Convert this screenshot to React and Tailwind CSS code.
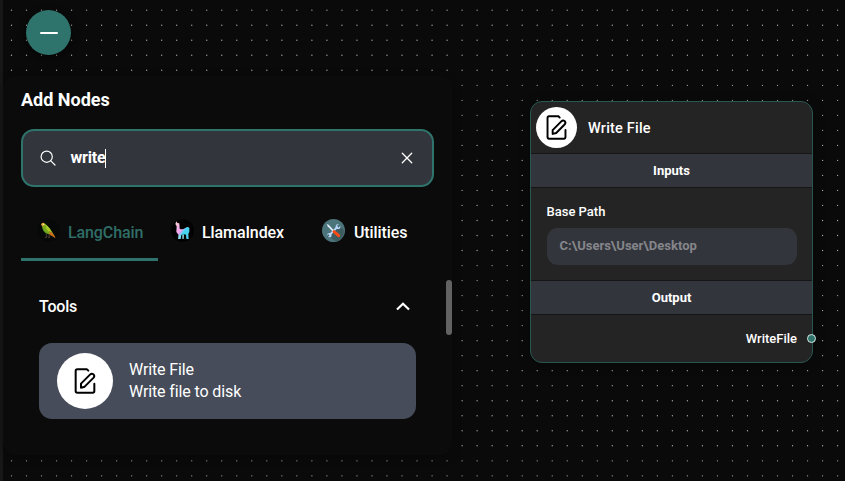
import React from "react";

function EditIcon({ className }) {
  return (
    <svg className={className} viewBox="0 0 64 78" fill="none" stroke="#000" strokeWidth="6" strokeLinecap="round" strokeLinejoin="round">
      <path d="M42 8 L38 4 H9 Q4 4 4 9 V69 Q4 74 9 74 H55 Q60 74 60 69 V47" />
      <path d="M20 47 L47 20 Q52 15 57 19 Q62 23 58 29 L31 56 L20 59 Z" />
    </svg>
  );
}

const GRID_STEP = 15.02;
const GRID_DOTS = Array.from({ length: 32 * 56 }, (_, i) => ({
  x: 11.5 + (i % 56) * GRID_STEP,
  y: 10.2 + Math.floor(i / 56) * GRID_STEP,
}));

function DotGrid() {
  return (
    <svg className="absolute inset-0 h-full w-full" fill="#a8a8a8">
      {GRID_DOTS.map((dot, i) => (
        <circle key={i} cx={dot.x} cy={dot.y} r="0.66" />
      ))}
    </svg>
  );
}

function Parrot() {
  return (
    <svg className="h-[23px] w-[23px]" viewBox="0 0 69 69">
      <circle cx="34.5" cy="34.5" r="34" fill="#070808" />
      <path d="M27 43 L30 54 M36 46 L37 54 M23 55 H30 M33 55 H39" stroke="#5a4a3a" strokeWidth="2.5" fill="none" />
      <path d="M14 16 Q18 10 25 14 L35 25 Q44 34 55 56 L37 46 Q20 42 16 26 Z" fill="#79a91a" />
      <path d="M26 17 Q39 25 43 39 L36 38 Q26 30 26 17" fill="#a8cb2a" />
      <path d="M37 35 Q47 41 56 57 L38 47 Z" fill="#d4651f" />
      <path d="M17 27 Q21 39 32 44 L25 42 Q17 37 16 27Z" fill="#3f8220" />
      <path d="M12 18 Q14 10 21 12 L24 17 L17 21 Z" fill="#e9a83c" />
      <circle cx="20" cy="16" r="2" fill="#fff1ca" />
    </svg>
  );
}

function Llama() {
  return (
    <svg className="h-[23px] w-[23px]" viewBox="0 0 69 69">
      <defs>
        <linearGradient id="llama" x1="0" y1="0" x2="1" y2="1">
          <stop offset="0" stopColor="#ffd7c6" />
          <stop offset=".25" stopColor="#f5b5e5" />
          <stop offset=".46" stopColor="#f2a0ed" />
          <stop offset=".6" stopColor="#42d7f5" />
          <stop offset="1" stopColor="#54c9e9" />
        </linearGradient>
      </defs>
      <circle cx="34.5" cy="34.5" r="34" fill="#000" />
      <path d="M13 15 L16 7 L19 12 L25 13 L26 29 Q34 33 43 27 Q51 21 55 27 L55 39 L52 45 L53 60 H46 L45 47 L39 46 L31 48 L29 60 H22 L23 48 L16 39 L17 22 Z" fill="url(#llama)" />
      <path d="M23 48 H29 L28 60 H22Z M34 48 L39 46 L38 60 H34Z" fill="#8fdceb" />
    </svg>
  );
}

function ToolsBadge() {
  return (
    <svg className="h-[23px] w-[23px]" viewBox="0 0 69 69">
      <circle cx="34.5" cy="34.5" r="34.5" fill="#4c747b" />
      <path d="M52 20 L66 34 Q67 57 43 68 L18 50Z" fill="#3d5d60" />
      <path d="M22 49 L47 23" stroke="#b9d7fa" strokeWidth="6" />
      <path d="M51 15 L44 21 L49 26 L55 20 Q57 31 46 30 Q38 28 42 19 Q45 14 51 15Z M14 49 Q18 40 27 43 L29 51 Q26 58 18 53 L24 49 L20 46Z" fill="#b9d7fa" />
      <path d="M14 15 L20 17 L38 37 L34 40 L17 22Z" fill="#e2effb" />
      <path d="M36 38 L50 50" stroke="#ff4b15" strokeWidth="9" strokeLinecap="round" />
    </svg>
  );
}

function AddNodesPanel() {
  return (
    <section className="ml-[3px] mt-[21px] flex h-[379px] w-[449px] flex-col rounded-xl bg-[#0b0b0b] pl-[18px] shadow-[0_2px_10px_rgba(0,0,0,0.25)]">
      <h2 className="mt-[12px] text-[18px] font-bold leading-[24px]">Add Nodes</h2>
      <div className="mt-[17px] flex h-[58px] w-[413px] items-center rounded-[13px] border-2 border-[#2f746c] bg-[#33353d] pl-[17px] pr-[19px]">
        <svg className="h-[16px] w-[16px]" viewBox="0 0 16 16" fill="none" stroke="#fff" strokeWidth="1.2" strokeLinecap="round">
          <circle cx="6.7" cy="6.7" r="5.6" />
          <path d="M10.8 10.8 L15 15" />
        </svg>
        <span className="ml-[14.5px] text-[16px] font-bold leading-5 tracking-[-0.2px]">write</span>
        <span className="h-[19px] w-px bg-white" />
        <svg className="ml-auto h-[12px] w-[12px]" viewBox="0 0 12 12" fill="none" stroke="#fff" strokeWidth="1.3" strokeLinecap="round">
          <path d="M1.3 1.3 L10.7 10.7 M10.7 1.3 L1.3 10.7" />
        </svg>
      </div>
      <nav className="mt-[18px] flex h-[56px] w-[413px] text-[16px] leading-5 tracking-[-0.1px]">
        <div className="flex w-[137px] items-center border-b-[3px] border-[#2f746c] pl-[16px] font-medium text-[#2f6e67]">
          <span className="mb-[2px]"><Parrot /></span>
          <span className="ml-[8px] mt-[2px]">LangChain</span>
        </div>
        <div className="flex w-[151px] items-center pb-[3px] pl-[13px] font-medium">
          <span className="mb-[2px]"><Llama /></span>
          <span className="ml-[8px] mt-[2px]">LlamaIndex</span>
        </div>
        <div className="flex items-center pb-[3px] pl-[13px] font-medium">
          <span className="mb-[2px]"><ToolsBadge /></span>
          <span className="ml-[9px] mt-[2px]">Utilities</span>
        </div>
      </nav>
      <div className="mt-[19px] flex items-start">
        <div className="ml-[18px] w-[377px]">
          <div className="flex h-[53px] items-center justify-between pr-[6.5px]">
            <span className="text-[16px] font-medium leading-5 tracking-[-0.2px]">Tools</span>
            <svg className="h-[9px] w-[14px]" viewBox="0 0 14 9" fill="none" stroke="#fff" strokeWidth="2.2">
              <path d="M1 7.5 L7 1.8 L13 7.5" />
            </svg>
          </div>
          <div className="mt-[10px] flex h-[76px] items-center rounded-[13px] bg-[#464c59] pl-[18px]">
            <div className="flex h-14 w-14 items-center justify-center rounded-full bg-white">
              <EditIcon className="h-[26px] w-[22px]" />
            </div>
            <div className="ml-4 text-[16px] leading-[22px] tracking-[-0.12px] text-white">
              <div>Write File</div>
              <div>Write file to disk</div>
            </div>
          </div>
        </div>
        <div className="ml-[30px] h-[55px] w-[6px] rounded-full bg-[#626262]" />
      </div>
    </section>
  );
}

function SectionBar({ children }) {
  return (
    <div className="flex h-[35px] items-center justify-center border-y border-[#151515] bg-[#33353d] text-[13px] font-bold">
      {children}
    </div>
  );
}

function WriteFileNode() {
  return (
    <article className="absolute left-[530px] top-[101px] h-[262px] w-[283px] rounded-[12px] border border-[#28574f] bg-[#242424] shadow-[0_2px_12px_rgba(0,0,0,0.3)]">
      <header className="flex h-[51px] items-center pl-[5px]">
        <div className="flex h-[41px] w-[41px] items-center justify-center rounded-full bg-white">
          <EditIcon className="h-[25px] w-[21px]" />
        </div>
        <span className="ml-[11px] mt-[2px] text-[14.5px] font-medium tracking-[0.2px]">Write File</span>
      </header>
      <SectionBar>Inputs</SectionBar>
      <div className="h-[92px] px-[15.5px] pt-[15px]">
        <div className="text-[13px] font-medium leading-[18px]">Base Path</div>
        <div className="mt-[7px] flex h-[37px] items-center rounded-[11px] bg-[#33353d] pl-[13px] text-[13px] font-bold text-[#85868a]"><span className="-mt-[1px]">C:\Users\User\Desktop</span></div>
      </div>
      <SectionBar>Output</SectionBar>
      <div className="flex h-[47px] items-center justify-end pr-[15px] text-[13px] font-medium">WriteFile</div>
      <span className="absolute right-[-4px] top-[232px] h-[9px] w-[9px] rounded-full border border-[#d8e5e3] bg-[#2f746c]" />
    </article>
  );
}

export default function App() {
  return (
    <main className="relative h-[481px] w-[845px] overflow-hidden bg-[#0a0a0a] text-white [font-family:Roboto,sans-serif]">
      <DotGrid />
      <div className="relative flex h-full border-l-[3px] border-[#171717]">
        <div className="-ml-[3px] pt-[10px]">
          <button className="ml-[26px] flex h-[45px] w-[45px] items-center justify-center rounded-full bg-[#2f746c] shadow-[0_3px_8px_rgba(0,0,0,0.6)]">
            <span className="h-[2px] w-[18px] rounded-full bg-white" />
          </button>
          <AddNodesPanel />
        </div>
      </div>
      <WriteFileNode />
    </main>
  );
}
